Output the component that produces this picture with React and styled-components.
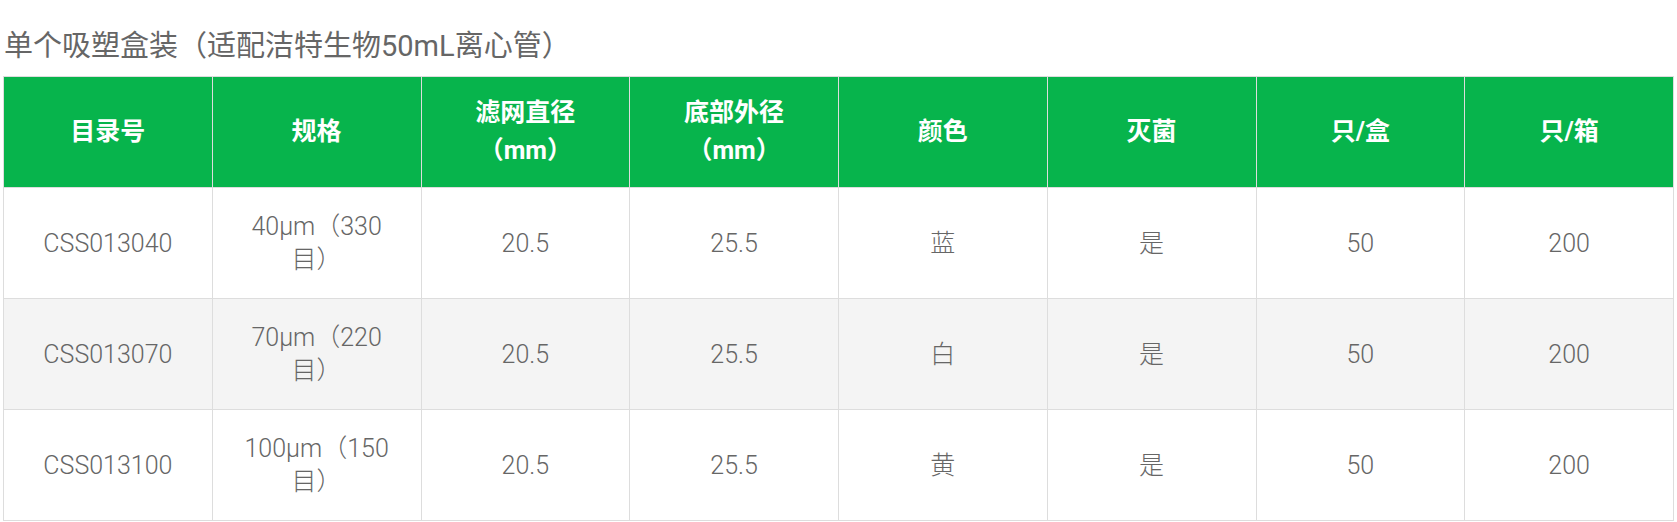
import React from 'react'
import styled, { createGlobalStyle } from 'styled-components'

const GlobalStyle = createGlobalStyle`
  body {
    margin: 0;
    background: #fff;
    font-family: Roboto, "Noto Sans CJK SC", sans-serif;
  }
`

const Wrapper = styled.div`
  padding: 25px 3px 0;
`

const Title = styled.h3`
  margin: 0 0 9px 1px;
  font-size: 29px;
  line-height: 42px;
  font-weight: 400;
  color: #666;
`

const Table = styled.table`
  width: 100%;
  table-layout: fixed;
  border-collapse: collapse;
`

const HeadCell = styled.th`
  height: 110px;
  padding: 0 28px;
  background: #07b44c;
  color: #fff;
  font-size: 25px;
  line-height: 38px;
  font-weight: 700;
  text-align: center;
  vertical-align: middle;
  border: 1px solid #ddd;
`

const Row = styled.tr`
  background: ${p => (p.$striped ? '#f4f4f4' : '#fff')};
`

const Cell = styled.td`
  height: 110px;
  padding: 0 28px;
  color: #666;
  font-size: 25px;
  line-height: 33px;
  font-weight: 300;
  text-align: center;
  vertical-align: middle;
  border: 1px solid #ddd;
`

const headers = ['目录号', '规格', '滤网直径（mm）', '底部外径（mm）', '颜色', '灭菌', '只/盒', '只/箱']

const rows = [
  ['CSS013040', '40μm（330目）', '20.5', '25.5', '蓝', '是', '50', '200'],
  ['CSS013070', '70μm（220目）', '20.5', '25.5', '白', '是', '50', '200'],
  ['CSS013100', '100μm（150目）', '20.5', '25.5', '黄', '是', '50', '200'],
]

export default function App() {
  return (
    <Wrapper>
      <GlobalStyle />
      <Title>单个吸塑盒装（适配洁特生物50mL离心管）</Title>
      <Table>
        <thead>
          <tr>
            {headers.map(h => (
              <HeadCell key={h}>{h}</HeadCell>
            ))}
          </tr>
        </thead>
        <tbody>
          {rows.map((r, i) => (
            <Row key={r[0]} $striped={i % 2 === 1}>
              {r.map((v, j) => (
                <Cell key={j}>{v}</Cell>
              ))}
            </Row>
          ))}
        </tbody>
      </Table>
    </Wrapper>
  )
}
